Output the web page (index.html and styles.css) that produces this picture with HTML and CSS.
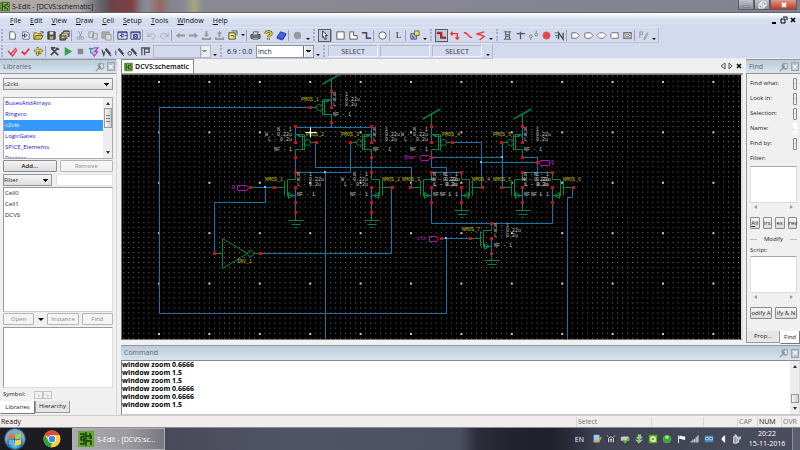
FILE: index.html
```html
<!DOCTYPE html>
<html lang="en">
<head>
<meta charset="utf-8">
<title>S-Edit - [DCVS:schematic]</title>
<link rel="stylesheet" href="styles.css">
</head>
<body>
<svg class="defs" aria-hidden="true">
  <defs>
    <symbol id="i-pin" viewBox="0 0 12 12"><path d="M4 2h6v6H5z" fill="#dfe5ea" stroke="#8a8f96"/><path d="M1 11l4-4M3 4l5 5M7 2c-2 1-2 3 0 4" fill="none" stroke="#8a8f96" stroke-width="1.4"/></symbol>
    <symbol id="i-sedit" viewBox="0 0 12 12"><path d="M1 1h10v10H1z" fill="#7cb83e" stroke="#33591c"/><path d="M3 2v8M3 6h3M6 3v6M6 4h3V2M6 8h3v2M9 6h2" fill="none" stroke="#15330d"/></symbol>
    <g id="pmos">
      <path d="M-20 0h5M-9 -8V8M-8 -8h8V-15M-8 7h8V15M-9 -6H-3" class="dev"/>
      <path d="M-7 -8V8" class="dev"/>
      <circle cx="-12" cy="0" r="3" class="dev"/>
      <path d="M-5 -8l5 1-4 2z" class="devfill"/>
      <path d="M0 -15V0" class="wire"/>
      <path d="M-22 -1h3v3h-3zM-1 -17h3v3h-3zM-1 -1h3v3h-3zM-1 14h3v3h-3z" class="pin"/>
    </g>
    <g id="nmos">
      <path d="M-20 0h9M-11 -7V8M-8 -8V9M-8 -8h8V-15M-8 8h8V15" class="dev"/>
      <path d="M-7 5l5 3-5 3z" class="dev"/>
      <path d="M0 0V15" class="wire"/>
      <path d="M-22 -1h3v3h-3zM-1 -16h3v3h-3zM-1 -1h3v3h-3zM-1 14h3v3h-3z" class="pin"/>
    </g>
    <g id="gnd"><path d="M0 0V7M-7 7H8M-4 11H5M-1 14H2" class="dev"/></g>
    <g id="vdd"><path d="M0 0V-13M-9 -8L9 -18" class="dev"/><path d="M-9 -9L9 -19" class="dev"/></g>
    <pattern id="minor" x="158.5" y="80.7" width="5.04" height="5.04" patternUnits="userSpaceOnUse"><rect width="1" height="1" fill="#7a7a7a"/></pattern>
    <pattern id="major" x="158" y="81" width="50.4" height="50.4" patternUnits="userSpaceOnUse"><rect width="2" height="2" fill="#c8c8c8"/></pattern>
  </defs>
</svg>

<header class="titlebar">
  <svg class="appicon"><use href="#i-sedit"/></svg>
  <span class="wintitle">S-Edit - [DCVS:schematic]</span>
  <div class="winbtns">
    <button aria-label="Minimize"><svg viewBox="0 0 12 8"><path d="M3 5h6v1H3z" fill="#fff" stroke="#444" stroke-width=".5"/></svg></button>
    <button aria-label="Restore"><svg viewBox="0 0 12 8"><path d="M5 1h5v4H5zM3 3h5v4H3z" fill="#999" stroke="#fff"/></svg></button>
    <button class="close" aria-label="Close"><svg viewBox="0 0 12 8"><path d="M4 2l4 4M8 2L4 6" stroke="#fff" stroke-width="2"/></svg></button>
  </div>
</header>

<nav class="menubar">
  <a href="#"><u>F</u>ile</a><a href="#"><u>E</u>dit</a><a href="#"><u>V</u>iew</a><a href="#"><u>D</u>raw</a><a href="#"><u>C</u>ell</a><a href="#"><u>S</u>etup</a><a href="#"><u>T</u>ools</a><a href="#"><u>W</u>indow</a><a href="#"><u>H</u>elp</a>
  <svg class="mdi" viewBox="0 0 26 10"><path d="M1 8h4" stroke="#000" stroke-width="2"/><path d="M12 2h4v3M10 4h4v4h-4z" fill="none" stroke="#000"/><path d="M20 3l4 4M24 3l-4 4" stroke="#000" stroke-width="1.6"/></svg>
</nav>

<div class="toolbars">
  <div class="toolrow">
    <div class="bar">
      <i class="grip"></i>
      <button aria-label="New"><svg viewBox="0 0 12 12"><path d="M3 2h4l2 2v6H3z" fill="#fff" stroke="#555"/></svg></button>
      <button aria-label="New view"><svg viewBox="0 0 12 12"><path d="M3 2h4l3 2v6H3z" fill="#fff" stroke="#667"/><path d="M2 6h3M5 4l3 2-3 2z" fill="none" stroke="#338"/></svg></button>
      <button aria-label="Open"><svg viewBox="0 0 12 12"><path d="M1 10V3h3l1 1h4v2" fill="#eee58a" stroke="#66601f"/><path d="M1 10l2-4h8l-2 4z" fill="#d5c63d" stroke="#5d5613"/><path d="M8 2h3v2" fill="none" stroke="#333"/></svg></button>
      <button aria-label="Save"><svg viewBox="0 0 12 12"><path d="M2 2h8v8H2z" fill="#54543c" stroke="#333"/><path d="M4 2h4v3H4z" fill="#ddd"/><path d="M4 7h4v3H4z" fill="#aaa"/></svg></button>
      <button aria-label="Save all"><svg viewBox="0 0 12 12"><path d="M5 1h6v6H9v2H7v2H1V5h2V3h2z" fill="#77733e" stroke="#333"/><path d="M3 5h6v4M5 3h6M3 8h3" fill="none" stroke="#ddd"/></svg></button>
      <i class="sep"></i>
      <button aria-label="Cut"><svg viewBox="0 0 12 12"><path d="M4 1l3 7M8 1L5 8" stroke="#999" fill="none"/><circle cx="4" cy="9" r="1.5" fill="none" stroke="#999"/><circle cx="8" cy="9" r="1.5" fill="none" stroke="#999"/></svg></button>
      <button aria-label="Copy"><svg viewBox="0 0 12 12"><path d="M1 2h5v6H1zM5 4h5v6H5z" fill="#ddd" stroke="#999"/></svg></button>
      <button aria-label="Paste"><svg viewBox="0 0 12 12"><path d="M1 2h8v7H1z" fill="#aaa" stroke="#999"/><path d="M5 5h6v6H5z" fill="#ddd" stroke="#999"/></svg></button>
      <i class="sep"></i>
      <button aria-label="Schematic view"><svg viewBox="0 0 12 12"><path d="M1 2h10v8H1z" fill="#dfe5ff" stroke="#335"/><path d="M1 3h10M3 6h2M9 6h2M5 4l3 2-3 2z" fill="none" stroke="#338"/></svg></button>
      <button aria-label="Symbol view"><svg viewBox="0 0 12 12"><path d="M1 2h10v8H1z" fill="#dfe5ff" stroke="#335"/><path d="M1 3h10M3 5l6 4M9 5L3 9M4 5h4v4H4z" fill="none" stroke="#338"/></svg></button>
      <i class="sep"></i>
      <button aria-label="Undo"><svg viewBox="0 0 12 12"><path d="M2 3v4h4M2 7c2-4 8-4 8 0 0 2-2 3-4 3" fill="none" stroke="#aaa"/></svg></button>
      <button aria-label="Redo"><svg viewBox="0 0 12 12"><path d="M10 3v4H6M10 7C8 3 2 3 2 7c0 2 2 3 4 3" fill="none" stroke="#aaa"/></svg></button>
      <i class="sep"></i>
      <button aria-label="Back"><svg viewBox="0 0 12 12"><path d="M1 6l4-3v2h6v2H5v2z" fill="#999"/></svg></button>
      <button aria-label="Forward"><svg viewBox="0 0 12 12"><path d="M11 6L7 3v2H1v2h6v2z" fill="#999"/></svg></button>
      <button aria-label="Push"><svg viewBox="0 0 12 12"><path d="M5 1h2v4h2L6 8 3 5h2zM1 8v3h10V8H9v1H3V8z" fill="#999"/></svg></button>
      <button aria-label="Pop"><svg viewBox="0 0 12 12"><path d="M5 8h2V4h2L6 1 3 4h2zM1 8v3h10V8H9v1H3V8z" fill="#999"/></svg></button>
      <button aria-label="Open cell"><svg viewBox="0 0 12 12"><path d="M2 3h7v7H2z" fill="#f5eb72" stroke="#444"/><path d="M5 1h6v5M4 6h3v2" fill="none" stroke="#554"/></svg></button>
      <i class="drop"></i>
      <i class="sep"></i>
      <button aria-label="Print"><svg viewBox="0 0 12 12"><path d="M1 5h10v4H1z" fill="#777" stroke="#444"/><path d="M3 5l1-3h5L8 5M3 8h6v2H3z" fill="#ddd" stroke="#555"/></svg></button>
      <button aria-label="Help"><svg viewBox="0 0 12 12"><path d="M3 4c0-3 6-3 6 0 0 2-3 1-3 4M6 9v2" fill="none" stroke="#555420" stroke-width="3"/><path d="M3 4c0-3 6-3 6 0 0 2-3 1-3 4M6 9v2" fill="none" stroke="#e8dc3a" stroke-width="1.5"/></svg></button>
      <button aria-label="Manual"><svg viewBox="0 0 12 12"><path d="M1 8l4-6 6 2-4 6z" fill="#4468e6" stroke="#2438a0"/><path d="M1 9l6 2 4-6" fill="none" stroke="#2438a0"/></svg></button>
      <i class="sep"></i>
      <button aria-label="Record"><svg viewBox="0 0 12 12"><circle cx="6" cy="6" r="4" fill="#999"/></svg></button>
      <i class="more"></i>
    </div>
    <div class="bar">
      <i class="grip"></i>
      <button class="on" aria-label="Select"><svg viewBox="0 0 12 12"><path d="M4 1l5 5H7l1 4-2 0-1-3-1 1z" fill="#fff" stroke="#222"/></svg></button>
      <i class="sep"></i>
      <button aria-label="Box"><svg viewBox="0 0 12 12"><path d="M2 2h8v8H2z" fill="#fff" stroke="#555"/></svg></button>
      <button aria-label="Polygon"><svg viewBox="0 0 12 12"><path d="M2 2h4v4h4v4H2z" fill="#fff" stroke="#555"/></svg></button>
      <button aria-label="Path"><svg viewBox="0 0 12 12"><path d="M1 3h5v6h5" fill="none" stroke="#444" stroke-width="1.6"/></svg></button>
      <i class="sep"></i>
      <button aria-label="Circle"><svg viewBox="0 0 12 12"><circle cx="6" cy="6" r="4" fill="#fff" stroke="#555"/></svg></button>
      <i class="sep"></i>
      <button class="letter">L</button>
      <i class="sep"></i>
      <button aria-label="Instance"><svg viewBox="0 0 12 12"><path d="M2 4h6v6H2z" fill="#b9c4ee" stroke="#446"/><path d="M6 1h5v5H6z" fill="#eee15a" stroke="#664"/><path d="M4 6v2h2" fill="none" stroke="#335"/></svg></button>
      <i class="more"></i>
    </div>
    <div class="bar">
      <i class="grip"></i>
      <button class="on" aria-label="Wire"><svg viewBox="0 0 12 12"><path d="M1 3h5v5h5" fill="none" stroke="#e02020" stroke-width="2"/><path d="M1 4l4 0v5h6" fill="none" stroke="#222" stroke-width=".8"/></svg></button>
      <button aria-label="Wire 90"><svg viewBox="0 0 12 12"><path d="M2 4h7v5M4 2L2 4l2 2M7 8l2 2 2-2" fill="none" stroke="#e33" stroke-width="1.5"/></svg></button>
      <button aria-label="Wire 45"><svg viewBox="0 0 12 12"><path d="M2 3h2l5 5h2" fill="none" stroke="#e33" stroke-width="1.5"/></svg></button>
      <button aria-label="Wire any"><svg viewBox="0 0 12 12"><path d="M10 2L3 4l7 3-5 4M2 5h3" fill="none" stroke="#e33" stroke-width="1.5"/></svg></button>
      <i class="more"></i>
    </div>
    <div class="bar last">
      <i class="grip"></i>
      <button aria-label="Bus"><svg viewBox="0 0 12 12"><path d="M2 2h8M2 10h8M4 5h4M4 7h4M4 2v8M8 2v8" fill="none" stroke="#555"/></svg></button>
      <button aria-label="Node"><svg viewBox="0 0 12 12"><path d="M2 4h9M6 2v8" stroke="#555" stroke-width="1.4"/></svg></button>
      <button aria-label="Net"><svg viewBox="0 0 12 12"><circle cx="3" cy="7" r="1.5" fill="none" stroke="#777"/><circle cx="9" cy="5" r="1.5" fill="none" stroke="#777"/><path d="M3 9v2M9 1v2" stroke="#777"/></svg></button>
      <button aria-label="Solder"><svg viewBox="0 0 12 12"><circle cx="6" cy="6" r="4" fill="#f04040" stroke="#b77"/></svg></button>
      <button aria-label="Net label"><svg viewBox="0 0 12 12"><path d="M5 10V3l5 7V3" fill="none" stroke="#444" stroke-width="1.4"/><path d="M1 3h3M1 6h3M2 8h2" stroke="#297070"/></svg></button>
      <i class="sep"></i>
      <button aria-label="In port"><svg viewBox="0 0 12 12"><path d="M2 3h5l3 3-3 3H2z" fill="#fff" stroke="#666"/></svg></button>
      <button aria-label="Out port"><svg viewBox="0 0 12 12"><path d="M4 3h4l3 3-3 3H4L2 8V4z" fill="#fff" stroke="#666"/></svg></button>
      <button aria-label="Inout port"><svg viewBox="0 0 12 12"><path d="M4 3h4l3 3-3 3H4L1 6z" fill="#fff" stroke="#777"/></svg></button>
      <button aria-label="Other port"><svg viewBox="0 0 12 12"><path d="M3 3h7v6H3L2 8V4z" fill="#fff" stroke="#666"/></svg></button>
      <button aria-label="Global port"><svg viewBox="0 0 12 12"><path d="M2 3h8v6H2z" fill="#fff" stroke="#777" stroke-width="1.5"/><path d="M4 5h4v2H4z" fill="none" stroke="#777"/></svg></button>
      <i class="sep"></i>
      <button aria-label="Property"><svg viewBox="0 0 12 12"><path d="M2 9V2h3v3H2M6 10l4-7 1 1-4 7z" fill="#ccc" stroke="#999"/></svg></button>
      <i class="more"></i>
    </div>
  </div>
  <div class="toolrow">
    <div class="bar">
      <i class="grip"></i>
      <button aria-label="Check hierarchy"><svg viewBox="0 0 12 12"><path d="M1 5l3 4 6-7M3 7l3 4 5-7" fill="none" stroke="#e03838" stroke-width="1.4"/></svg></button>
      <button aria-label="Check view"><svg viewBox="0 0 12 12"><path d="M2 6l3 3 5-6" fill="none" stroke="#ee3030" stroke-width="2"/></svg></button>
      <button aria-label="Navigate"><svg viewBox="0 0 12 12"><path d="M5 1v10M1 5h10M8 3v6M3 8h6" stroke="#696825" stroke-width="2"/><path d="M5 2v8M2 5h8M8 4v4" stroke="#e9dc45"/></svg></button>
      <i class="sep"></i>
      <button aria-label="Setup"><svg viewBox="0 0 12 12"><path d="M2 10l7-7M3 3l7 7M2 2h5M8 2l3 2" stroke="#444" stroke-width="1.8"/></svg></button>
      <button aria-label="Run"><svg viewBox="0 0 12 12"><path d="M3 1l8 5-8 5z" fill="#32a544"/></svg></button>
      <button aria-label="Stop"><svg viewBox="0 0 12 12"><path d="M3 3h6v6H3z" fill="#888"/></svg></button>
      <button aria-label="Waveform"><svg viewBox="0 0 12 12"><path d="M1 3h5M3 2v6" stroke="#2aa089" stroke-width="1.4"/><path d="M6 2h5L7 6h4M4 7l3 4 3-4" fill="none" stroke="#a545d0" stroke-width="1.4"/></svg></button>
      <button aria-label="Probe voltage"><svg viewBox="0 0 12 12"><path d="M1 4l2 6 1-4M9 9l2 2" fill="none" stroke="#444" stroke-width="1.3"/><path d="M5 3l5 6" stroke="#445" stroke-width="2.6"/></svg></button>
      <button aria-label="Probe current"><svg viewBox="0 0 12 12"><path d="M2 5v5M9 9l2 2" stroke="#444"/><path d="M5 3l5 6" stroke="#445" stroke-width="2.6"/></svg></button>
      <button aria-label="Probe charge"><svg viewBox="0 0 12 12"><circle cx="3" cy="8" r="2" fill="none" stroke="#444"/><path d="M9 9l2 2" stroke="#444"/><path d="M5 3l5 6" stroke="#445" stroke-width="2.6"/></svg></button>
      <button aria-label="Operating point"><svg viewBox="0 0 12 12"><path d="M1 2h10M2 2v8M5 10V3h5v4H6" fill="none" stroke="#555" stroke-width="1.4"/></svg></button>
      <select class="blank" aria-label="Analysis" disabled><option></option></select>
      <i class="more"></i>
    </div>
    <div class="bar">
      <i class="grip"></i>
      <label class="coords" for="unit">6.9 : 0.0</label>
      <select class="unit" id="unit"><option>inch</option></select>
      <i class="more"></i>
    </div>
    <div class="bar last">
      <i class="grip"></i>
      <span class="mode">SELECT</span><span class="mode"></span><span class="mode">SELECT</span>
      <i class="more"></i>
    </div>
  </div>
</div>

<main class="work">
  <aside class="libs">
    <h2 class="phead">Libraries<svg><use href="#i-pin"/></svg><button aria-label="Close panel">×</button></h2>
    <div class="libbody">
      <select class="libsel" aria-label="Library"><option>c2ckt</option></select>
      <div class="listwrap">
        <ul class="liblist"><li>BusesAndArrays</li><li>Ringvco</li><li class="sel">c2ckt</li><li>LogicGates</li><li>SPICE_Elements</li><li>Devices</li></ul>
        <div class="vscroll"><i class="up"></i><b class="thumb"></b><i class="dn"></i></div>
      </div>
      <div class="two"><button class="btn strong">Add...</button><button class="btn" disabled>Remove</button></div>
      <div class="filter"><select aria-label="Filter kind"><option>Filter</option></select><input type="text" aria-label="Filter text"></div>
      <ul class="cells"><li>Cell0</li><li>Cell1</li><li>DCVS</li></ul>
      <div class="three"><button class="btn" disabled>Open</button><i class="drop big"></i><button class="btn" disabled>Instance</button><button class="btn" disabled>Find</button></div>
      <div class="preview"></div>
      <div class="symbol">Symbol:<button aria-label="Previous">‹</button><button aria-label="Next">›</button></div>
    </div>
    <div class="tabs"><button class="tab cur">Libraries</button><button class="tab">Hierarchy</button></div>
  </aside>

  <div class="right">
    <div class="upper">
      <section class="doc">
        <div class="doctabs"><span class="doctab"><svg><use href="#i-sedit"/></svg>DCVS:schematic</span>
          <svg class="docnav" viewBox="0 0 24 10"><path d="M6 2L2 5l4 3zM10 2l3 3-3 3z" fill="none" stroke="#555"/><path d="M18 3l4 4M22 3l-4 4" stroke="#111" stroke-width="1.6"/></svg></div>
        <div class="canvas">
          <svg class="sheet">
            <g transform="translate(-122 -75)">
              <rect x="122" y="75" width="4000" height="4000" fill="url(#minor)"/>
              <rect x="122" y="75" width="4000" height="4000" fill="url(#major)"/>
              <g class="wires">
                <path d="M310 107H159V313H446V238M441 238H471"/>
                <path d="M331 122V127M295 127H371M295 157V172M371 157V172"/>
                <path d="M315 142V167H411V187M350 142V172H295M325 172V4000"/>
                <path d="M250 187H275M265 187V202H214V253M260 253H391V187"/>
                <path d="M451 142H481V187M431 157H502M431 157V167H446V172M431 172H461"/>
                <path d="M502 142V187M522 157H537V172M481 162H537M522 172H552"/>
                <path d="M431 202V223H552V202M572 187V197H567V4000"/>
                <path d="M295 202V213M371 202V213"/>
              </g>
              <path d="M264 186h2v2h-2zM324 171h2v2h-2zM445 237h2v2h-2zM501 156h2v2h-2zM480 161h2v2h-2z" fill="#5bc8ff"/>
              <use href="#vdd" x="331" y="92"/><use href="#pmos" x="331" y="107"/>
              <use href="#pmos" transform="translate(296 142) scale(-1 1)"/><use href="#pmos" x="371" y="142"/>
              <use href="#vdd" x="431" y="127"/><use href="#pmos" transform="translate(432 142) scale(-1 1)"/>
              <use href="#vdd" x="522" y="127"/><use href="#pmos" x="522" y="142"/>
              <use href="#nmos" x="295" y="187"/><use href="#nmos" transform="translate(372 187) scale(-1 1)"/>
              <use href="#nmos" x="431" y="187"/><use href="#nmos" transform="translate(462 187) scale(-1 1)"/>
              <use href="#nmos" x="522" y="187"/><use href="#nmos" transform="translate(553 187) scale(-1 1)"/>
              <use href="#nmos" x="491" y="238"/>
              <use href="#gnd" x="295" y="213"/><use href="#gnd" x="371" y="213"/><use href="#gnd" x="461" y="203"/><use href="#gnd" x="522" y="203"/><use href="#gnd" x="491" y="253"/>
              <path d="M214 253H222V238L247 253L222 268V253M253 253H260" class="dev"/><circle cx="250" cy="253" r="3" class="dev"/>
              <path d="M213 252h3v3h-3zM259 252h3v3h-3zM249 186h3v3h-3zM294 211h3v3h-3zM370 211h3v3h-3zM440 237h3v3h-3zM490 222h3v3h-3zM536 161h3v3h-3z" class="pin"/>
              <g class="port">
                <path d="M237 185h9l2 2-2 3h-9zM421 155h7l2 2-2 3h-7l-2-3zM540 160h9v5h-9l-2-3zM429 236h7l2 2-2 3h-7z"/>
                <text x="232" y="189">D</text><text x="404" y="159">Qbar</text><text x="551" y="164">Q</text><text x="417" y="240">clk</text>
              </g>
              <g class="name">
                <text x="301" y="101">PMOS_1</text><text x="306" y="136">PMOS_2</text><text x="341" y="136">PMOS_3</text><text x="442" y="136">PMOS_4</text><text x="493" y="136">PMOS_5</text>
                <text x="265" y="181">NMOS_1</text><text x="382" y="181">NMOS_2</text><text x="402" y="181">NMOS_3</text><text x="472" y="181">NMOS_4</text><text x="493" y="181">NMOS_5</text><text x="563" y="181">NMOS_6</text><text x="462" y="231">NMOS_7</text><text x="237" y="263">INV_1</text>
              </g>
              <g class="par">
                <text x="333" y="96">N - 1<tspan x="333" dy="5">W - 0.22u</tspan><tspan x="333" dy="5">L - 0.2u</tspan><tspan x="333" dy="10">NF - 1</tspan></text>
                <text x="373" y="131">N - 1<tspan x="373" dy="5">W - 0.22u</tspan><tspan x="373" dy="5">L - 0.2u</tspan><tspan x="373" dy="10">NF - 1</tspan></text>
                <text x="524" y="131">N - 1<tspan x="524" dy="5">W - 0.22u</tspan><tspan x="524" dy="5">L - 0.2u</tspan><tspan x="524" dy="10">NF - 1</tspan></text>
                <text x="297" y="176">N - 1<tspan x="297" dy="5">W - 0.22u</tspan><tspan x="297" dy="5">L - 0.2u</tspan><tspan x="297" dy="10">NF - 1</tspan></text>
                <text x="433" y="176">N - 1<tspan x="433" dy="5">W - 0.22u</tspan><tspan x="433" dy="5">L - 0.2u</tspan><tspan x="433" dy="10">NF - 1</tspan></text>
                <text x="524" y="176">N - 1<tspan x="524" dy="5">W - 0.22u</tspan><tspan x="524" dy="5">L - 0.2u</tspan><tspan x="524" dy="10">NF - 1</tspan></text>
                <text x="494" y="227">N - 1<tspan x="494" dy="5">W - 0.22u</tspan><tspan x="494" dy="5">L - 0.2u</tspan><tspan x="494" dy="10">NF - 1</tspan></text>
              </g>
              <g class="par end">
                <text x="292" y="131">N - 1<tspan x="292" dy="5">W - 0.22u</tspan><tspan x="292" dy="5">L - 0.2u</tspan><tspan x="292" dy="10">NF - 1</tspan></text>
                <text x="428" y="131">N - 1<tspan x="428" dy="5">W - 0.22u</tspan><tspan x="428" dy="5">L - 0.2u</tspan><tspan x="428" dy="10">NF - 1</tspan></text>
                <text x="368" y="176">N - 1<tspan x="368" dy="5">W - 0.22u</tspan><tspan x="368" dy="5">L - 0.2u</tspan><tspan x="368" dy="10">NF - 1</tspan></text>
                <text x="458" y="176">N - 1<tspan x="458" dy="5">W - 0.22u</tspan><tspan x="458" dy="5">L - 0.2u</tspan><tspan x="458" dy="10">NF - 1</tspan></text>
                <text x="549" y="176">N - 1<tspan x="549" dy="5">W - 0.22u</tspan><tspan x="549" dy="5">L - 0.2u</tspan><tspan x="549" dy="10">NF - 1</tspan></text>
              </g>
              <path d="M305 132h11M310 127v10" fill="none" stroke="#fff" transform="translate(.5 .5)"/>
            </g>
          </svg>
        </div>
      </section>

      <aside class="find">
        <h2 class="phead">Find<svg><use href="#i-pin"/></svg><button aria-label="Close panel">×</button></h2>
        <div class="findbody">
          <div class="frow"><label for="f1">Find what:</label><button id="f1" class="stub">·</button></div>
          <div class="frow"><label for="f2">Look in:</label><button id="f2" class="stub">·</button></div>
          <div class="frow"><label for="f3">Selection:</label><button id="f3" class="stub">·</button></div>
          <div class="frow"><label for="f4">Name:</label><input id="f4" type="text" value="-"></div>
          <div class="frow"><label for="f5">Find by:</label><button id="f5" class="stub">·</button></div>
          <div class="frow"><label for="f6">Filter:</label></div>
          <textarea id="f6"></textarea>
          <div class="hscroll"><i></i><i></i></div>
          <div class="four"><button class="btn"><u>A</u>ll</button><button class="btn">irs</button><button class="btn">ex</button><button class="btn">rev</button></div>
          <div class="rule">Modify</div>
          <label class="script" for="f7">Script:</label>
          <textarea id="f7"></textarea>
          <div class="hscroll"><i></i><i></i></div>
          <div class="pair"><button class="btn">odify A</button><button class="btn">ify &amp; N</button></div>
        </div>
        <div class="tabs"><button class="tab wide">Prop...</button><button class="tab cur">Find</button></div>
      </aside>
    </div>

    <section class="command">
      <h2 class="phead">Command<svg><use href="#i-pin"/></svg><button aria-label="Close panel">×</button></h2>
      <div class="log">
        <div class="lines"><p>window zoom 0.6666</p><p>window zoom 1.5</p><p>window zoom 1.5</p><p>window zoom 0.6666</p><p>window zoom 0.6666</p><p>window zoom 1.5</p></div>
        <div class="vscroll"><i class="up"></i><b class="thumb low"></b><i class="dn"></i></div>
      </div>
    </section>
  </div>
</main>

<div class="status"><span class="grow">Ready</span><span class="s75 dim">Select</span><span class="s52"></span><span class="s34"></span><span class="s20 dim">CAP</span><span class="s24">NUM</span><span class="s17 dim">OVR</span></div>

<footer class="taskbar">
  <svg class="orb" viewBox="0 0 24 22"><defs><radialGradient id="og" cy=".8"><stop offset="0" stop-color="#62d8f5"/><stop offset=".6" stop-color="#286fa5"/><stop offset="1" stop-color="#7aa9c4"/></radialGradient></defs><circle cx="12" cy="11" r="10.5" fill="url(#og)" stroke="#294c66"/><path d="M6 7q3-2 5-1v5q-2-1-5 0z" fill="#f0703a"/><path d="M12 6q3 1 6-1v5q-3 2-6 1z" fill="#9fd04a"/><path d="M6 12q3-1 5 0v5q-2-1-5 0z" fill="#5fb3ee"/><path d="M12 12q3 1 6-1v5q-3 2-6 1z" fill="#fbd34b"/></svg>
  <svg class="chrome" viewBox="0 0 18 18"><circle cx="9" cy="9" r="8.5" fill="#fdd22f"/><path d="M9 9L1.6 4.8A8.5 8.5 0 0 1 16.5 5H9z" fill="#e04a38"/><path d="M1.6 4.8L5.5 11 9 13l-1.5 4.4A8.5 8.5 0 0 1 1.6 4.8z" fill="#2ba24c"/><circle cx="9" cy="9" r="4" fill="#fff"/><circle cx="9" cy="9" r="3.2" fill="#3f86f4"/></svg>
  <button class="task"><svg viewBox="0 0 16 16"><path d="M0 0h16v16H0z" fill="#62a62e"/><path d="M2 3h4v3H3v3h3v4H2M8 1v14M8 5h4V2M8 10h5v4M11 7h3M5 8h2M13 4v3" fill="none" stroke="#153c0e" stroke-width="1.4"/></svg>S-Edit - [DCVS:sc...</button>
  <div class="tray">
    <span class="lang">EN</span>
    <svg viewBox="0 0 12 12"><path d="M2 1h7v9H2z" fill="#8fd0f0"/><path d="M2 8q5 4 9-4" fill="none" stroke="#f0953a" stroke-width="2"/></svg>
    <svg viewBox="0 0 12 12"><path d="M1 1h10v10H1z" fill="#33343c"/><path d="M3 10V5l3-2 3 2v5M5 10V6h2v4M1 2l2 1M11 2L9 3" fill="none" stroke="#e8e8e8"/></svg>
    <svg viewBox="0 0 12 12"><path d="M1 4l2-1h7l1 2v3H1z" fill="#c9ccc9"/><path d="M4 7l2 3 5-5" fill="none" stroke="#46c437" stroke-width="2"/></svg>
    <svg viewBox="0 0 12 12"><path d="M5 1h3v3h2L6 7 3 4h2zM2 7l4 4 4-4-4 1z" fill="#6fd14b" stroke="#dff5da" stroke-width=".6"/></svg>
    <svg viewBox="0 0 12 12"><path d="M1 1h10v10H1z" fill="#62b414"/><circle cx="6" cy="6" r="2.6" fill="none" stroke="#fff" stroke-width="1.4"/><path d="M7 7l2 2" stroke="#fff" stroke-width="1.4"/></svg>
    <svg viewBox="0 0 12 12"><circle cx="6" cy="6" r="4.5" fill="#1fb81f" stroke="#8c968c"/><circle cx="6" cy="4" r="2" fill="#9df08f"/></svg>
    <svg viewBox="0 0 12 12"><path d="M3 2v9" stroke="#fff"/><path d="M4 2h3l1 1h3v4H8L7 6H4z" fill="#fff"/></svg>
    <svg viewBox="0 0 12 12"><path d="M1 10V9h1v1zM3 10V7h1v3zM5 10V6h1v4zM7 10V4h1v6zM9 10V2h1v8z" fill="#e4e4e4" stroke="#ccc" stroke-width=".5"/></svg>
    <svg viewBox="0 0 12 12"><path d="M1 2h10v8H1z" fill="#2d8cc4"/><path d="M2 4h3v3H2zM7 4h3v3H7z" fill="#14435f" stroke="#dceefa"/></svg>
    <svg viewBox="0 0 12 12"><path d="M5 5l3-3v8L5 7z" fill="#fff" stroke="#fff"/></svg>
    <svg viewBox="0 0 12 12"><path d="M2 3h4v8H2zM3 1h2v2M7 3v3h3V3M8 6v4h-2" fill="#999" stroke="#eee"/></svg>
    <div class="clock"><time>20:22</time><time>15-11-2016</time></div>
    <i class="peek"></i>
  </div>
</footer>
</body>
</html>
```

FILE: styles.css
```css
* { box-sizing: border-box; }
body {
  margin: 0; min-height: 100vh; display: flex; flex-direction: column;
  font: 7px/11px "Open Sans", "Noto Sans", sans-serif; color: #1b1b1b; background: #f0f0f0;
}
h2, ul, p { margin: 0; padding: 0; }
h2 { font-weight: normal; }
ul { list-style: none; }
button, select, input, textarea { font: inherit; color: inherit; margin: 0; padding: 0; border-radius: 0; min-width: 0; }
button { background: none; border: 0; }
svg { display: block; }
.defs { position: absolute; width: 0; height: 0; }

.titlebar {
  height: 13px; display: flex; align-items: center; gap: 2px; overflow: hidden;
  background: linear-gradient(90deg, #b0a9a6 0, #aaa5a6 80px, #62606b 102px, #6e4249 112px, #7d4142 132px, #84838f 142px, #8c8b97 148px, #93695f 160px, #85838e 170px, #8a8993 184px, #a8a57f 194px, #8a8993 204px, #828291 100%);
  border-bottom: 1px solid #63636f;
}
.appicon { width: 10px; height: 11px; }
.wintitle { font-size: 7px; color: #111; }
.winbtns { margin-left: auto; align-self: flex-start; display: flex; margin-right: 3px; }
.winbtns button { width: 16px; height: 10px; border: 1px solid #5c5c66; border-top: 0; background: linear-gradient(#c3c3cb, #8a8a96); display: grid; place-items: center; }
.winbtns button.close { width: 27px; background: linear-gradient(#dd9a8c, #c03a22); }
.winbtns svg { width: 12px; height: 8px; }

.menubar { height: 14px; display: flex; align-items: center; gap: 9px; padding: 0 3px 0 10px; background: linear-gradient(#fff, #d9e0f1 6px, #d3daee); }
.menubar a { color: #111; text-decoration: none; }
.mdi { width: 26px; height: 10px; margin-left: auto; }

.toolbars { background: #d3daee; height: 32px; border-bottom: 1px solid #e6eaf5; }
.toolrow { display: flex; height: 16px; }
.bar { display: flex; align-items: center; border-bottom: 1px solid #bcc3d6; border-top: 1px solid #e1e6f4; }
.bar.last { border-right: 1px solid #b4bbcd; }
.bar > * { flex: none; }
.bar button { width: 13px; height: 13px; display: grid; place-items: center; }
.bar button svg { width: 11px; height: 11px; }
.bar button.on { border: 1px solid #555d70; background: #c3cadd; }
.bar button.letter { font: 9px/11px "Liberation Serif", serif; }
.grip { width: 5px; height: 12px; border-left: 2px dotted #a6aec4; margin-left: 1px; }
.sep { width: 3px; height: 11px; border-left: 1px solid #9aa1b5; }
.drop, .more { width: 7px; display: grid; place-items: center; }
.drop::before, .more::before { content: ""; border: 2px solid transparent; border-top-color: #111; border-bottom: 0; }
.drop.big::before { border-width: 3px 3px 0; }
.more { align-self: flex-end; height: 6px; margin-right: 1px; }
select { appearance: none; border: 1px solid #8e96a8; background: linear-gradient(#111, #111) no-repeat right 3px top 4px / 5px 1px, linear-gradient(#111, #111) no-repeat right 4px top 5px / 3px 1px, linear-gradient(#111, #111) no-repeat right 5px top 6px / 1px 1px, linear-gradient(#f5f5f5, #dedede); }
select.blank { width: 58px; height: 13px; background: linear-gradient(#999, #999) no-repeat right 3px top 4px / 5px 1px, linear-gradient(#999, #999) no-repeat right 4px top 5px / 3px 1px, linear-gradient(90deg, #aab, #aab) no-repeat right 9px top 0 / 1px 100%, linear-gradient(90deg, #d3daee 48px, #eee 0); border-color: #b0b7c9; opacity: 1; margin-left: 1px; }
.coords { width: 31px; padding-left: 2px; white-space: nowrap; }
select.unit { width: 58px; height: 13px; padding-left: 1px; background: linear-gradient(#111, #111) no-repeat right 2px top 4px / 5px 1px, linear-gradient(#111, #111) no-repeat right 3px top 5px / 3px 1px, linear-gradient(#666, #666) no-repeat right 9px top 0 / 1px 100%, linear-gradient(90deg, #fff 48px, #e6e6e6 0); }
.mode { width: 50px; height: 12px; margin-right: 2px; text-align: center; border: 1px solid #b0b8cb; border-right-color: #f2f5fb; border-bottom-color: #f2f5fb; line-height: 11px; color: #333; }

.work { flex: 1; display: flex; min-height: 0; }
.phead { height: 14px; flex: none; display: flex; align-items: center; padding: 0 1px 0 3px; font-size: 7px; line-height: 12px; color: #5b6670; background: linear-gradient(#bccad9, #d8e5f0); border-top: 1px solid #8f979f; }
.phead svg { width: 10px; height: 10px; margin-left: auto; }
.phead button { width: 8px; height: 9px; margin-left: 2px; font: bold 9px/6px "Liberation Sans", sans-serif; color: #fff; border: 1px solid #9aa3ab; background: #b9c2ca; }

.libs { width: 117px; flex: none; display: flex; flex-direction: column; border-right: 1px solid #d6d6d6; }
.libbody, .findbody, .tabs { font-size: 6px; }
.libbody { flex: 1; display: flex; flex-direction: column; padding: 4px 3px 0; border-top: 1px solid #999; }
.libsel { height: 12px; width: 100%; }
.listwrap { height: 62px; margin-top: 7px; display: flex; border: 1px solid #ababab; background: #fff; overflow: hidden; }
.liblist { flex: 1; color: #1414e6; }
.liblist li, .cells li { height: 11px; padding-left: 1px; }
.liblist .sel { background: #3399ff; color: #fff; }
.vscroll { width: 9px; display: flex; flex-direction: column; align-items: center; background: #ededed; padding: 4px 0; }
.vscroll .up, .vscroll .dn { border: 2px solid transparent; border-bottom: 3px solid #333; border-top: 0; }
.vscroll .dn { border-bottom: 0; border-top: 3px solid #333; margin-top: auto; }
.thumb { width: 8px; height: 20px; margin-top: 3px; border: 1px solid #999; background: repeating-linear-gradient(#777 0 1px, transparent 0 3px) center / 4px 7px no-repeat, linear-gradient(90deg, #f7f7f7, #cdcdcd); }
.thumb.low { height: 9px; margin-top: auto; background: linear-gradient(90deg, #f7f7f7, #cdcdcd); }
.thumb.low + .dn { margin-top: 4px; }
.btn { height: 12px; line-height: 10px; border: 1px solid #8b8b8b; border-radius: 1px; background: linear-gradient(#f4f4f4, #dcdcdc); overflow: hidden; white-space: nowrap; text-align: center; }
.btn:disabled { color: #8a8a8a; border-color: #b5b5b5; background: #f4f4f4; }
.btn.strong { font-weight: 600; }
.two { display: grid; grid-template-columns: 1fr 1fr; gap: 3px; margin-top: 1px; }
.filter { display: grid; grid-template-columns: 49px 1fr; gap: 4px; margin-top: 2px; }
.filter select, .filter input { height: 12px; }
.filter input { border: 1px solid #e2e2e2; background: #fff; }
.cells { flex: 1; margin-top: 1px; border: 1px solid #999; border-right-color: #ddd; border-bottom-color: #ccc; background: #fff; }
.three { display: flex; gap: 3px; margin-top: 1px; align-items: center; }
.three .btn { flex: 1; }
.preview { height: 61px; margin-top: 2px; background: #fff; border: 1px solid #999; border-right-color: #ddd; border-bottom-color: #ddd; }
.symbol { height: 13px; display: flex; align-items: center; }
.symbol button { width: 9px; height: 8px; line-height: 6px; border: 1px solid #c5c5c5; color: #777; }
.symbol button:first-of-type { margin-left: 9px; }
.tabs { display: flex; height: 14px; flex: none; align-items: flex-start; }
.tab { height: 12px; padding: 0 3px; border: 1px solid #999; border-top: 0; background: #e6e6e6; white-space: nowrap; }
.libs .tab { width: 35px; padding: 0; }
.tab.wide { flex: 1; }
.tab.cur { background: #fff; height: 13px; border-color: #777 #777 #777 #fff; }

.right { flex: 1; min-width: 0; display: flex; flex-direction: column; padding-left: 4px; }
.upper { flex: 1; display: flex; gap: 3px; min-height: 0; }
.doc { flex: 1; min-width: 0; display: flex; flex-direction: column; padding-bottom: 5px; }
.doctabs { height: 15px; display: flex; align-items: center; background: #f0f0f0; border-bottom: 1px solid #9c9c9c; }
.doctab { display: flex; align-items: center; gap: 2px; height: 14px; padding: 0 4px 0 2px; background: #fff; border: 1px solid #888; border-bottom: 0; font-weight: 600; color: #000; }
.doctab svg { width: 9px; height: 10px; }
.docnav { width: 24px; height: 10px; margin-left: auto; }
.canvas { flex: 1; display: flex; border: 1px solid #777; border-width: 1px 2px 1px 1px; border-right-color: #ddd; background: #000; overflow: hidden; }
.sheet { width: 100%; height: 100%; min-height: 200px; }
.dev { fill: none; stroke: #078343; transform: translate(.5px, .5px); }
.devfill { fill: #078343; }
.wires, .wire { fill: none; stroke: #1a73a6; transform: translate(.5px, .5px); }
.pin { fill: #d40d0d; }
.port path { fill: none; stroke: #b010b0; transform: translate(.5px, .5px); }
.sheet text { font: 5px "Liberation Mono", monospace; }
.port text { fill: #d020d0; }
.name text { fill: #c9bf12; }
.par text { fill: #c4c4c4; }
.end text { text-anchor: end; }

.find { width: 54px; flex: none; display: flex; flex-direction: column; overflow: hidden; }
.findbody { flex: 1; padding: 2px 3px 0; border-left: 1px solid #999; border-top: 1px solid #999; }
.frow { height: 15px; display: flex; align-items: center; justify-content: space-between; white-space: nowrap; }
.stub { width: 4px; height: 12px; border: 1px solid #888; line-height: 9px; border-radius: 1px; }
.frow input { width: 4px; height: 12px; border: 0; background: #fff; }
.find textarea { display: block; width: 100%; height: 37px; border: 1px solid #ddd; border-top-color: #aaa; background: #fff; resize: none; }
.hscroll { height: 8px; display: flex; justify-content: space-between; align-items: center; padding: 0 4px; }
.hscroll i { border: 2px solid transparent; border-right: 3px solid #999; border-left: 0; }
.hscroll i + i { border-right: 0; border-left: 3px solid #999; }
.four, .pair { display: grid; grid-template-columns: repeat(4, 1fr); gap: 3px; margin-top: 6px; }
.pair { grid-template-columns: 1fr 1fr; }
.four .btn { overflow: visible; }
.rule { display: flex; align-items: center; gap: 7px; margin-top: 5px; height: 11px; }
.rule::before, .rule::after { content: ""; flex: 1; border-top: 1px solid #bbb; }
.script { display: block; height: 11px; }

.command { height: 70px; flex: none; display: flex; flex-direction: column; }
.command .phead { height: 15px; }
.log { flex: 1; display: flex; border: 1px solid #888; border-right-color: #ddd; border-bottom-color: #ccc; background: #fff; }
.lines { flex: 1; font-weight: 700; line-height: 8px; color: #000; }

.status { height: 12px; display: flex; align-items: center; background: #f0edec; border-top: 1px solid #ccc; }
.status span { padding-left: 1px; height: 10px; line-height: 10px; border-left: 1px solid #d8d5d4; }
.status .grow { flex: 1; border: 0; }
.status .dim { color: #777; }
.s75 { width: 75px; } .s52 { width: 52px; } .s34 { width: 34px; } .s20 { width: 20px; } .s24 { width: 24px; } .s17 { width: 19px; }

.taskbar { height: 23px; display: flex; align-items: center; overflow: hidden; border-top: 1px solid #8b8b91; padding-left: 3px; background: linear-gradient(90deg, #1c1c23 0, #1d1c22 70px, #494b5a 170px, #515465 300px, #4c4f60 460px, #2b2d39 478px, #23242e 510px, #1e1f28 550px, #3d4152 600px, #4b4e5f 100%); color: #fff; }
.orb { width: 24px; height: 22px; }
.chrome { width: 18px; height: 18px; margin-left: 16px; }
.task { width: 93px; height: 22px; margin-left: 11px; padding-left: 5px; display: flex; align-items: center; gap: 3px; font-size: 7px; color: #fff; white-space: nowrap; border: 1px solid #aeaeb4; background: linear-gradient(90deg, #aaa9ac, #9b9a9f 60%, #77777f); }
.task svg { width: 16px; height: 16px; flex: none; }
.tray { margin-left: auto; display: flex; align-items: center; gap: 4px; height: 100%; }
.tray svg { width: 10px; height: 10px; }
.lang { margin-right: 4px; }
.clock { width: 42px; text-align: center; line-height: 10px; }
.clock time { display: block; }
.peek { width: 8px; height: 100%; border-left: 1px solid #888b98; background: #5b5e6e; }
```
